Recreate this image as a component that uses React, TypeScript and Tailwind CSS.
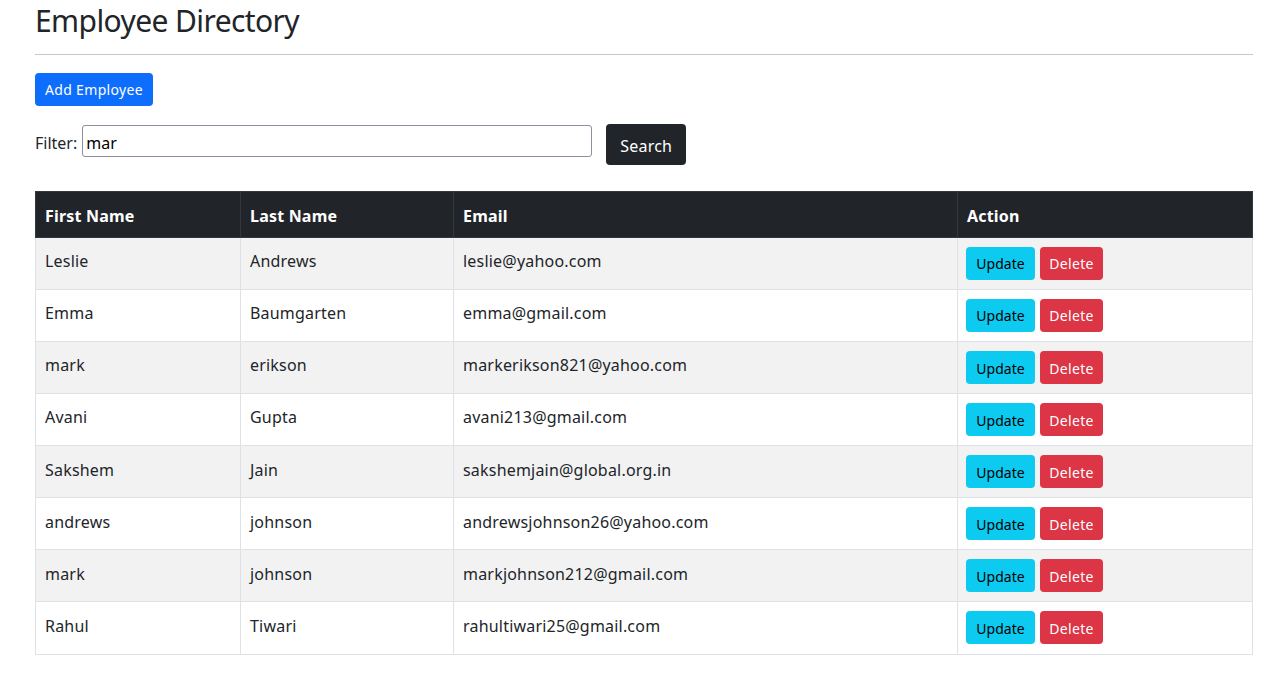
const rows = [
  ["Leslie", "Andrews", "leslie@yahoo.com"],
  ["Emma", "Baumgarten", "emma@gmail.com"],
  ["mark", "erikson", "markerikson821@yahoo.com"],
  ["Avani", "Gupta", "avani213@gmail.com"],
  ["Sakshem", "Jain", "sakshemjain@global.org.in"],
  ["andrews", "johnson", "andrewsjohnson26@yahoo.com"],
  ["mark", "johnson", "markjohnson212@gmail.com"],
  ["Rahul", "Tiwari", "rahultiwari25@gmail.com"],
];

export default function App() {
  return (
    <div className="bg-white min-h-[679px] pl-[35px] pr-[18px] text-[#212529] font-['Noto_Sans','Open_Sans',sans-serif] text-base">
      <h3 className="text-[30px] leading-[39px] h-[39px] pt-[1px] m-0 tracking-[-0.6px] font-normal">Employee Directory</h3>
      <hr className="mt-[15px] border-0 border-t border-t-[#c8c8c8]" />
      <button className="mt-[18px] block h-[33px] w-[118px] bg-[#0d6efd] text-white rounded text-sm tracking-[0.35px]">Add Employee</button>
      <div className="mt-[18px] flex items-start h-[41px]">
        <label className="mt-[8px] text-base leading-[22px]">Filter:</label>
        <input
          defaultValue="mar"
          className="ml-[5px] mt-[1px] w-[510px] h-[32px] border border-[#8f8f9d] rounded-[3px] pl-[3px] pt-[4px] text-base text-black outline-none"
        />
        <button className="ml-[14px] w-[80px] h-[41px] pt-[2px] bg-[#212529] text-white rounded text-base tracking-[0.2px]">Search</button>
      </div>
      <table className="mt-[26px] w-[1217px] table-fixed border-collapse border border-[#dee2e6]">
        <colgroup>
          <col className="w-[205px]" />
          <col className="w-[213px]" />
          <col className="w-[504px]" />
          <col className="w-[295px]" />
        </colgroup>
        <thead>
          <tr className="h-[46px] bg-[#212529] text-white">
            {["First Name", "Last Name", "Email", "Action"].map((h) => (
              <th key={h} className="border border-[#32383e] px-[9px] pt-[3px] text-left font-bold text-base tracking-[0.2px]">{h}</th>
            ))}
          </tr>
        </thead>
        <tbody>
          {rows.map((r, i) => (
            <tr key={i} className={`${i === 7 ? "h-[53px]" : "h-[52px]"} ${i % 2 === 0 ? "bg-[#f2f2f2]" : "bg-white"}`}>
              {r.map((c, j) => (
                <td key={j} className={`border border-[#dee2e6] px-[9px] text-base tracking-[0.2px] ${i === 7 ? "pb-[4px]" : i >= 4 ? "pb-[3px]" : "pb-[5px]"}`}>{c}</td>
              ))}
              <td className="border border-[#dee2e6] px-[8px] align-top pt-[9px]">
                <div className="flex gap-[5px]">
                  <button className={`w-[69px] h-[33px] bg-[#0dcaf0] text-black rounded text-sm ${i >= 2 ? "pt-[2px]" : ""}`}>Update</button>
                  <button className={`w-[63px] h-[33px] bg-[#dc3545] text-white rounded text-sm tracking-[0.35px] ${i >= 2 ? "pt-[2px]" : ""}`}>Delete</button>
                </div>
              </td>
            </tr>
          ))}
        </tbody>
      </table>
    </div>
  );
}
